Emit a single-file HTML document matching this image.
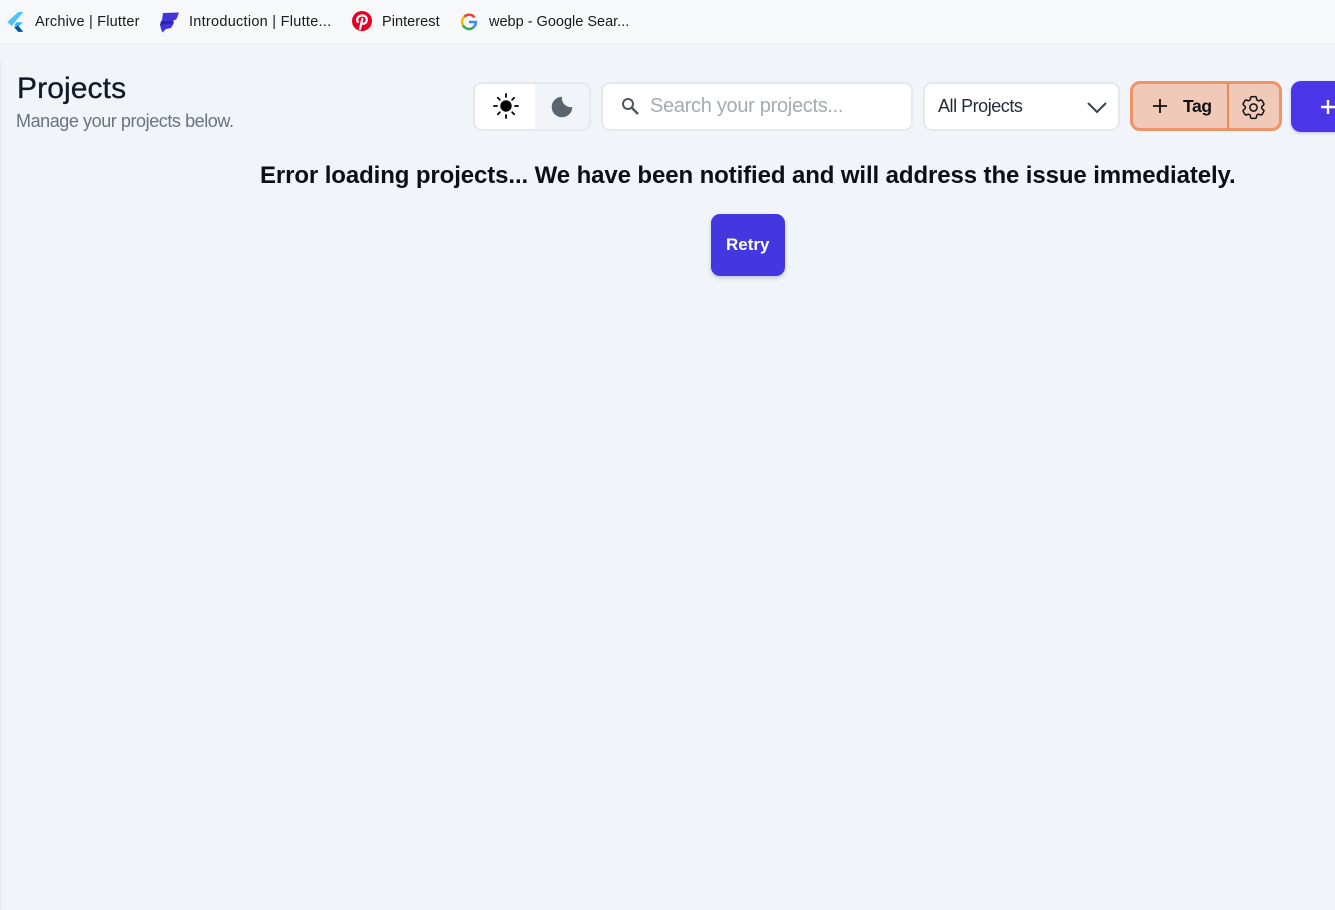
<!DOCTYPE html>
<html lang="en">
<head>
<meta charset="utf-8">
<title>Projects</title>
<style>
html,body{margin:0;padding:0;width:1335px;height:910px;overflow:hidden;background:#f1f5f9;font-family:"Liberation Sans",sans-serif}
.a{position:absolute;white-space:nowrap}
svg{position:absolute;overflow:visible}
#bar{left:0;top:0;width:1335px;height:43px;background:#f7f8f9;border-bottom:1px solid #eceef1}
#edge{left:0;top:62px;width:4px;height:848px;background:linear-gradient(90deg,#e6eaef,#f1f5f9)}
.bm{font-size:14.5px;color:#1a1a1a;top:13px;line-height:18px}
.box{background:#fff;border:2px solid #e5e9ef;box-sizing:border-box}
</style>
</head>
<body>
<div class="a" id="bar"></div>
<div class="a" id="edge"></div>

<svg style="left:6px;top:11px" width="18" height="22" viewBox="0 0 18 22"><path d="M12.300 1h5L5.700 15 1.300 11z" fill="#4fc3f7"/><path d="M10.700 11.300h6L12.300 15.700 8 14.500z" fill="#29b6f6"/><path d="M8 16l4.300-1.300 5 6-5 .3z" fill="#01579b"/></svg>
<span class="a bm" style="left:35px;letter-spacing:.2px">Archive | Flutter</span>

<svg style="left:158px;top:11px" width="22" height="22" viewBox="0 0 22 22"><path d="M5 2 21 1.500 18.500 8 15 10 16 12 13 17 8 18 4.500 21.500 3 18 2 14 4 9z" fill="#3f35d8"/><path d="M3 10h11.500l-1 2.500-11.500 1.500z" fill="#2a22a8"/></svg>
<span class="a bm" style="left:189px;letter-spacing:.27px">Introduction | Flutte...</span>

<svg style="left:352px;top:11px" width="20" height="20" viewBox="0 0 20 20"><circle cx="10" cy="10" r="10" fill="#e60023"/><path d="M8 18l2.300-10M5.800 11c-1.800-3.500.8-6.500 4.400-6.500 3.300 0 5 2.200 4.500 5-.5 2.700-2.700 4-4.700 2.800" fill="none" stroke="#fff" stroke-width="2.200" stroke-linecap="round"/></svg>
<span class="a bm" style="left:382px;letter-spacing:.05px">Pinterest</span>

<svg style="left:461px;top:14px" width="16" height="16" viewBox="0 0 16 16"><path d="M13.500 3.300A7 7 0 0 0 3 3" fill="none" stroke="#ea4335" stroke-width="2.500"/><path d="M3.300 2.700A7 7 0 0 0 2.200 11.700" fill="none" stroke="#fbbc05" stroke-width="2.500"/><path d="M2 11.400A7 7 0 0 0 12.500 13.400" fill="none" stroke="#34a853" stroke-width="2.500"/><path d="M8 8h6.800c0 2.500-1 4.300-2.500 5.400" fill="none" stroke="#4285f4" stroke-width="2.500"/></svg>
<span class="a bm" style="left:489px;letter-spacing:0">webp - Google Sear...</span>

<span class="a" style="left:17px;top:72px;font-size:30px;line-height:34px;color:#111827;-webkit-text-stroke:.3px #111827;letter-spacing:.1px">Projects</span>
<span class="a" style="left:16px;top:110px;font-size:18px;line-height:22px;color:#6b7280;letter-spacing:-.43px">Manage your projects below.</span>

<div class="a" style="left:473px;top:82px;width:118px;height:49px;box-sizing:border-box;border:2px solid #e5e9ef;border-radius:9px;background:#f1f5f9"></div>
<div class="a" style="left:475px;top:84px;width:60px;height:45px;background:#fff;border-radius:7px 0 0 7px"></div>
<svg style="left:492.500px;top:93px" width="26" height="26" viewBox="0 0 26 26"><circle cx="13" cy="13" r="5.700" fill="#000"/><path d="M13 1v3M13 22v3M1 13h3M22 13h3M4.800 4.800l2 2M19.200 19.200l2 2M4.800 21.200l2-2M19.200 6.800l2-2" stroke="#000" stroke-width="1.800" stroke-linecap="round"/></svg>
<svg style="left:550px;top:94.500px" width="24" height="24" viewBox="0 0 24 24"><path d="M12 1.700A10.300 10.300 0 1 0 22.300 12 8.900 8.900 0 0 1 12 1.700z" fill="#5b6570"/></svg>

<div class="a box" style="left:601px;top:82px;width:312px;height:49px;border-radius:9px"></div>
<svg style="left:620px;top:96px" width="20" height="20" viewBox="0 0 20 20"><circle cx="8" cy="8" r="5" fill="none" stroke="#4b5563" stroke-width="2"/><path d="M12 12l6 6" stroke="#4b5563" stroke-width="2.400"/></svg>
<span class="a" style="left:650px;top:94px;font-size:20px;line-height:24px;color:#a6abb3;letter-spacing:-.3px">Search your projects...</span>

<div class="a box" style="left:923px;top:82px;width:197px;height:49px;border-radius:9px"></div>
<span class="a" style="left:938px;top:95px;font-size:18px;line-height:22px;color:#1f2937;letter-spacing:-.47px">All Projects</span>
<svg style="left:1086px;top:100px" width="22" height="16" viewBox="0 0 22 16"><path d="M2 3l9 9 9-9" fill="none" stroke="#374151" stroke-width="2"/></svg>

<div class="a" style="left:1130px;top:81px;width:152px;height:50px;box-sizing:border-box;background:#f0c9b8;border:3px solid #ee9468;border-radius:10px"></div>
<div class="a" style="left:1227px;top:83px;width:2px;height:47px;background:#e98a5c"></div>
<svg style="left:1152px;top:98px" width="16" height="16" viewBox="0 0 16 16"><path d="M8 1v14M1 8h14" stroke="#111" stroke-width="1.800"/></svg>
<span class="a" style="left:1183px;top:95px;font-size:17.5px;line-height:22px;font-weight:bold;color:#111;letter-spacing:-.4px">Tag</span>
<svg style="left:1239px;top:92.500px" width="29" height="29" viewBox="0 0 24 24"><path d="M9.594 3.940c.09-.542.56-.94 1.110-.94h2.593c.55 0 1.020.398 1.110.94l.213 1.281c.063.374.313.686.645.870.074.040.147.083.220.127.325.196.720.257 1.075.124l1.217-.456a1.125 1.125 0 0 1 1.370.490l1.296 2.247a1.125 1.125 0 0 1-.260 1.431l-1.003.827c-.293.241-.438.613-.430.992a7.723 7.723 0 0 1 0 .255c-.008.378.137.750.430.991l1.004.827c.424.350.534.955.260 1.430l-1.298 2.247a1.125 1.125 0 0 1-1.369.491l-1.217-.456c-.355-.133-.750-.072-1.076.124a6.470 6.470 0 0 1-.220.128c-.331.183-.581.495-.644.869l-.213 1.281c-.090.543-.560.940-1.110.940h-2.594c-.550 0-1.019-.398-1.110-.940l-.213-1.281c-.062-.374-.312-.686-.644-.870a6.520 6.520 0 0 1-.220-.127c-.325-.196-.720-.257-1.076-.124l-1.217.456a1.125 1.125 0 0 1-1.369-.490l-1.297-2.247a1.125 1.125 0 0 1 .260-1.431l1.004-.827c.292-.240.437-.613.430-.991a6.932 6.932 0 0 1 0-.255c.007-.380-.138-.751-.430-.992l-1.004-.827a1.125 1.125 0 0 1-.260-1.430l1.297-2.247a1.125 1.125 0 0 1 1.370-.491l1.216.456c.356.133.751.072 1.076-.124.072-.044.146-.086.220-.128.332-.183.582-.495.644-.869l.214-1.280z" fill="none" stroke="#111" stroke-width="1.250" stroke-linejoin="round"/><circle cx="12" cy="12" r="3" fill="none" stroke="#111" stroke-width="1.250"/></svg>

<div class="a" style="left:1291px;top:81px;width:70px;height:51px;background:#4c35e8;border-radius:10px;box-shadow:0 1px 3px rgba(60,50,180,.3)"></div>
<svg style="left:1320px;top:98px" width="15" height="18" viewBox="0 0 15 18"><path d="M8 2v14M1 9h14" stroke="#fff" stroke-width="2.400"/></svg>

<span class="a" style="left:260px;top:160.500px;font-size:24px;line-height:29px;font-weight:bold;color:#0b0f19;letter-spacing:-.105px">Error loading projects... We have been notified and will address the issue immediately.</span>

<div class="a" style="left:711px;top:214px;width:74px;height:62px;background:#4338e0;border-radius:9px;box-shadow:0 2px 4px rgba(50,50,120,.25)"></div>
<span class="a" style="left:726px;top:234px;font-size:17px;line-height:22px;font-weight:bold;color:#fff">Retry</span>
</body>
</html>
